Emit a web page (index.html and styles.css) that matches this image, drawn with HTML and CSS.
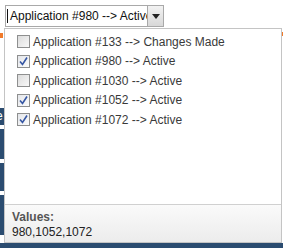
FILE: index.html
```html
<!DOCTYPE html>
<html>
<head>
<meta charset="utf-8">
<link rel="stylesheet" href="styles.css">
</head>
<body>
<div class="page">
  <div class="bg-left">
    <div class="blk b1"><span>e</span></div>
    <div class="blk b2"></div>
    <div class="blk b3"></div>
    <div class="blk b4"></div>
  </div>
  <div class="mark m1"></div>
  <div class="mark m2"></div>
  <div class="bottom-bar"></div>

  <div class="select">
    <span class="select-text">Application #980 --&gt; Active</span>
    <span class="select-btn"><svg width="8" height="5" viewBox="0 0 8 5"><path d="M0 0H8L4 5Z" fill="#222"/></svg></span>
  </div>

  <div class="dropdown">
    <ul class="list">
      <li class="row"><span class="cb"></span><span>Application #133 --&gt; Changes Made</span></li>
      <li class="row"><span class="cb on"><svg width="11" height="11" viewBox="0 0 11 11"><path d="M2 5.5L4.5 8.5L9 1.5" fill="none" stroke="#3556a3" stroke-width="1.6"/></svg></span><span>Application #980 --&gt; Active</span></li>
      <li class="row"><span class="cb"></span><span>Application #1030 --&gt; Active</span></li>
      <li class="row"><span class="cb on"><svg width="11" height="11" viewBox="0 0 11 11"><path d="M2 5.5L4.5 8.5L9 1.5" fill="none" stroke="#3556a3" stroke-width="1.6"/></svg></span><span>Application #1052 --&gt; Active</span></li>
      <li class="row"><span class="cb on"><svg width="11" height="11" viewBox="0 0 11 11"><path d="M2 5.5L4.5 8.5L9 1.5" fill="none" stroke="#3556a3" stroke-width="1.6"/></svg></span><span>Application #1072 --&gt; Active</span></li>
    </ul>
    <div class="footer">
      <div class="label">Values:</div>
      <div class="values">980,1052,1072</div>
    </div>
  </div>
</div>
</body>
</html>
```

FILE: styles.css
```css
html, body {
  margin: 0;
  padding: 0;
  background: #fff;
}
.page {
  position: relative;
  width: 283px;
  height: 248px;
  overflow: hidden;
  font-family: "Liberation Sans", Arial, sans-serif;
  font-size: 12px;
}
.bg-left {
  position: absolute;
  left: 0;
  top: 108px;
  width: 10px;
}
.blk {
  background: #2b4c70;
  color: #fff;
  margin-bottom: 4px;
  font-size: 12px;
  line-height: 16px;
  overflow: hidden;
}
.blk span { margin-left: -4px; }
.b1 { height: 17px; }
.b2 { height: 30px; }
.b3 { height: 28px; }
.b4 { height: 40px; }
.mark {
  position: absolute;
  background: #f07a2a;
}
.m1 { left: 0; top: 33px; width: 3px; height: 5px; }
.m2 { left: 282px; top: 32px; width: 1px; height: 4px; }
.bottom-bar {
  position: absolute;
  left: 0;
  top: 243px;
  width: 283px;
  height: 5px;
  background: #2b4c70;
}
.select {
  margin: 5px 0 0 5px;
  width: 157px;
  height: 20px;
  border: 1px solid #a9a9a9;
  display: flex;
  align-items: stretch;
  background: #fff;
  box-sizing: content-box;
  position: relative;
}
.select-text {
  flex: 1;
  overflow: hidden;
  white-space: nowrap;
  line-height: 20px;
  padding-left: 2px;
  color: #111;
  border-left: 1px solid #111;
  margin: 3px 0 3px 1px;
  line-height: 14px;
}
.select-btn {
  width: 15px;
  border-left: 1px solid #a9a9a9;
  background: linear-gradient(#f2f2f2, #d8d8d8);
  display: flex;
  align-items: center;
  justify-content: center;
}
.dropdown {
  position: absolute;
  left: 4px;
  top: 28px;
  width: 278px;
  height: 215px;
  box-sizing: border-box;
  border: 1px solid #c4c4c4;
  background: #fff;
  display: flex;
  flex-direction: column;
}
.list {
  list-style: none;
  margin: 0;
  padding: 3px 0 0 0;
  flex: 1;
}
.row {
  height: 19.5px;
  display: flex;
  align-items: center;
  color: #3a3a3a;
  white-space: nowrap;
}
.cb {
  width: 11px;
  height: 11px;
  border: 1px solid #8e8f8f;
  background: linear-gradient(135deg, #dcdcdc, #f8f8f8);
  margin-left: 12px;
  margin-right: 3px;
  display: flex;
  align-items: center;
  justify-content: center;
  flex: none;
}
.cb.on {
  background: linear-gradient(135deg, #e4e6ea, #fbfbfb);
}
.footer {
  height: 38px;
  border-top: 1px solid #d0d0d0;
  background: linear-gradient(#fafafa, #ececec);
  padding: 5px 0 0 7px;
  box-sizing: border-box;
}
.label {
  font-weight: bold;
  color: #555;
  line-height: 15px;
}
.values {
  color: #222;
  line-height: 15px;
}
```
